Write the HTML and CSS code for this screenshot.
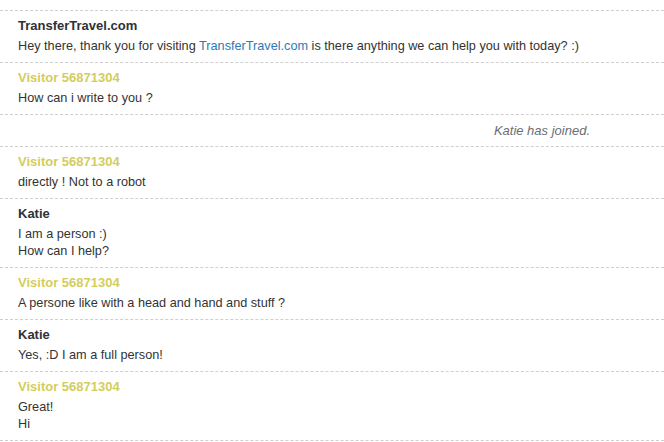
FILE: index.html
```html
<!DOCTYPE html>
<html>
<head>
<meta charset="utf-8">
<link rel="stylesheet" href="styles.css">
</head>
<body>
<div class="chat">
  <div class="msg">
    <div class="name">TransferTravel.com</div>
    <div class="text">Hey there, thank you for visiting <a class="link" href="#">TransferTravel.com</a> is there anything we can help you with today? :)</div>
  </div>
  <div class="msg">
    <div class="name visitor">Visitor 56871304</div>
    <div class="text">How can i write to you ?</div>
  </div>
  <div class="sys">Katie has joined.</div>
  <div class="msg">
    <div class="name visitor">Visitor 56871304</div>
    <div class="text">directly ! Not to a robot</div>
  </div>
  <div class="msg">
    <div class="name">Katie</div>
    <div class="text">I am a person :)<br>How can I help?</div>
  </div>
  <div class="msg">
    <div class="name visitor">Visitor 56871304</div>
    <div class="text">A persone like with a head and hand and stuff ?</div>
  </div>
  <div class="msg">
    <div class="name">Katie</div>
    <div class="text">Yes, :D I am a full person!</div>
  </div>
  <div class="msg">
    <div class="name visitor">Visitor 56871304</div>
    <div class="text">Great!<br>Hi</div>
  </div>
  <div class="end"></div>
</div>
</body>
</html>
```
FILE: styles.css
```css
html, body {
  margin: 0;
  padding: 0;
  background: #ffffff;
}
body {
  font-family: "Liberation Sans", Arial, sans-serif;
  font-size: 13px;
  color: #333333;
}
.chat {
  padding-top: 10px;
}
.msg {
  border-top: 1px dashed #cfcfcf;
  padding: 6px 18px 7px;
}
.name {
  font-weight: bold;
  line-height: 18px;
  margin-bottom: 3px;
  color: #2f3136;
}
.name.visitor {
  color: #d4cd5c;
}
.text {
  font-size: 12.7px;
  line-height: 17px;
}
.link {
  color: #2f79b5;
  text-decoration: none;
}
.sys {
  border-top: 1px dashed #cfcfcf;
  padding: 7px 74px 7px 18px;
  line-height: 17px;
  text-align: right;
  font-style: italic;
  color: #6b6e73;
}
.end {
  border-top: 1px dashed #cfcfcf;
}
```
